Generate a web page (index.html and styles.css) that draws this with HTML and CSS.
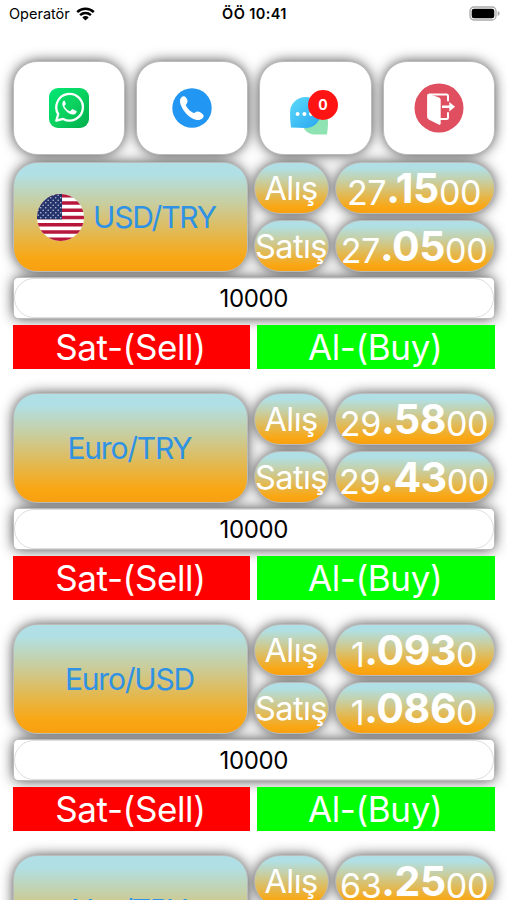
FILE: index.html
```html
<!DOCTYPE html>
<html lang="tr">
<head>
    <meta charset="utf-8">
    <title>Kurlar</title>
    <link rel="stylesheet" href="styles.css">
</head>
<body>
    <div class="statusbar">
        <div class="carrier">
            <span>Operatör</span>
            <svg width="19" height="14" viewBox="0 0 19 14">
                <path d="M1.2 5.2a12 12 0 0 1 16.6 0M4.1 8.1a8 8 0 0 1 10.8 0" fill="none" stroke="#000" stroke-width="2.5"/>
                <path d="M9.5 13.6L6.3 10.4a4.6 4.6 0 0 1 6.4 0z"/>
            </svg>
        </div>
        <div class="clock">ÖÖ 10:41</div>
        <div class="battery">
            <svg width="31" height="15" viewBox="0 0 31 15">
                <rect x="1" y="1" width="26" height="13" rx="4" fill="#fff" stroke="#aaa" stroke-width="1.3"/>
                <rect x="2.7" y="2.7" width="22.6" height="9.6" rx="2.4"/>
                <path d="M28.6 5v5c1.6-.6 2-1.5 2-2.5s-.4-1.9-2-2.5z" fill="#aaa"/>
            </svg>
        </div>
    </div>

    <div class="menu">
        <div class="box menuItem">
            <svg width="40" height="40" viewBox="0 0 40 40">
                <defs>
                    <linearGradient id="wa" x1="0" y1="0" x2="1" y2="1">
                        <stop offset="0" stop-color="#00e676"/>
                        <stop offset=".5" stop-color="#0bd25f"/>
                        <stop offset="1" stop-color="#00ad4c"/>
                    </linearGradient>
                </defs>
                <rect width="40" height="40" rx="9" fill="url(#wa)"/>
                <path d="M7.3 32.7l1.9-6.6a13.3 13.3 0 1 1 5 4.8z" fill="none" stroke="#fff" stroke-width="2.3" stroke-linejoin="round"/>
                <path d="M15.7 12.7c-.7-.2-1.600.3-2 1.200-.9 1.800-.3 4.200 1.300 6.500 2.300 3.300 5.500 5.900 8.600 6.200 1.800.1 3.500-.9 3.900-2.300.2-.8.100-1.200-.5-1.500l-3.100-1.500c-.6-.3-.9-.1-1.300.4l-1.100 1.300c-.3.300-.6.300-1.100.1-2.200-1-3.800-2.500-4.900-4.500-.2-.4-.1-.7.2-1l.9-1.200c.3-.4.2-.7.100-1.100l-1-2.600z" fill="#fff"/>
            </svg>
        </div>
        <div class="box menuItem">
            <svg width="40" height="40" viewBox="0 0 40 40">
                <circle cx="20" cy="20" r="19.7" fill="#2196f3"/>
                <path d="M9.5 9.2c1.7-1.5 3.5-1 4.8.8 1.5 2 1.7 4.3.2 5.9-.7.8-.6 1.6 0 2.6 1.5 2.5 3.5 4.5 6.1 6 1 .6 1.6.6 2.4-.1 1.6-1.4 3.8-1.1 6 .4 3 2 3.4 3.6 1.6 5.4-2.5 2.4-6.4 2.3-10.6 0-5.4-3-9.300-8.200-11.200-13.100C7.6 13.7 7.6 11 9.5 9.2z" fill="#fff"/>
            </svg>
        </div>
        <div class="box menuItem">
            <div class="chat">
                <svg width="40" height="40" viewBox="0 0 40 40">
                    <defs>
                        <linearGradient id="bubble" x1="0" y1="0" x2="1" y2="1">
                            <stop offset="0" stop-color="#5edbfa"/>
                            <stop offset="1" stop-color="#27a5f0"/>
                        </linearGradient>
                    </defs>
                    <path d="M25 14c8 0 14 5.500 14 13q0 6-1 12.500H26c-5 0-9-2.500-11-6z" fill="#8fe3b2"/>
                    <path d="M2 32.500q-1-7-1-15A15.500 15.500 0 1 1 16.500 33z" fill="url(#bubble)"/>
                    <circle cx="8.600" cy="19" r="2" fill="#fff"/>
                    <circle cx="15.400" cy="19" r="2" fill="#fff"/>
                    <circle cx="22" cy="19" r="2" fill="#fff"/>
                </svg>
                <span class="badge">0</span>
            </div>
        </div>
        <div class="box menuItem">
            <svg width="50" height="50" viewBox="0 0 50 50">
                <circle cx="25" cy="25" r="24.5" fill="#df4f60"/>
                <path d="M14.5 10.8L25 14.5q1.7.7 1.7 2.2v23.5q0 2-2 1.2l-9.600-4.700q-2-1-2-3V12.8q0-2 1.400-2z" fill="#fff"/>
                <path d="M15 11.400h17.500q1.500 0 1.500 1.500v5.300M26 36h6.500q1.500 0 1.500-1.500v-5.300" fill="none" stroke="#fff" stroke-width="2"/>
                <path d="M28 22.600h7.300v-3.600L41 23.800l-5.700 4.800v-3.600H28z" fill="#fff"/>
            </svg>
        </div>
    </div>

    <div class="rate">
        <div class="prices">
            <div class="box grad pair">
                <svg class="flag" width="47" height="47" viewBox="0 0 47 47">
                    <defs>
                        <clipPath id="round"><circle cx="23.5" cy="23.5" r="23.5"/></clipPath>
                        <pattern id="stars" width="5" height="5" patternUnits="userSpaceOnUse">
                            <circle cx="1.2" cy="1.2" r=".8" fill="#b9c2da"/>
                            <circle cx="3.7" cy="3.7" r=".8" fill="#b9c2da"/>
                        </pattern>
                    </defs>
                    <g clip-path="url(#round)">
                        <rect width="47" height="47" fill="#fff"/>
                        <path d="M0 1.8h47M0 9h47M0 16.3h47M0 23.5h47M0 30.7h47M0 38h47M0 45.2h47" stroke="#b8173c" stroke-width="3.6"/>
                        <rect width="25" height="25.3" fill="#25336b"/>
                        <rect width="25" height="25.3" fill="url(#stars)"/>
                    </g>
                </svg>
                <span>USD/TRY</span>
            </div>
            <div class="box grad label">Alış</div>
            <div class="box grad value"><span>27</span><b>.15</b><span>00</span></div>
            <div class="box grad label">Satış</div>
            <div class="box grad value"><span>27</span><b>.05</b><span>00</span></div>
        </div>
        <div class="box amount"><div class="amountInner">10000</div></div>
        <div class="buttons">
            <div class="sell">Sat-(Sell)</div>
            <div class="buy">Al-(Buy)</div>
        </div>
    </div>

    <div class="rate">
        <div class="prices">
            <div class="box grad pair"><span>Euro/TRY</span></div>
            <div class="box grad label">Alış</div>
            <div class="box grad value"><span>29</span><b>.58</b><span>00</span></div>
            <div class="box grad label">Satış</div>
            <div class="box grad value"><span>29</span><b>.43</b><span>00</span></div>
        </div>
        <div class="box amount"><div class="amountInner">10000</div></div>
        <div class="buttons">
            <div class="sell">Sat-(Sell)</div>
            <div class="buy">Al-(Buy)</div>
        </div>
    </div>

    <div class="rate">
        <div class="prices">
            <div class="box grad pair"><span>Euro/USD</span></div>
            <div class="box grad label">Alış</div>
            <div class="box grad value"><span>1</span><b>.093</b><span>0</span></div>
            <div class="box grad label">Satış</div>
            <div class="box grad value"><span>1</span><b>.086</b><span>0</span></div>
        </div>
        <div class="box amount"><div class="amountInner">10000</div></div>
        <div class="buttons">
            <div class="sell">Sat-(Sell)</div>
            <div class="buy">Al-(Buy)</div>
        </div>
    </div>

    <div class="rate">
        <div class="prices">
            <div class="box grad pair"><span>Yen/TRY</span></div>
            <div class="box grad label">Alış</div>
            <div class="box grad value"><span>63</span><b>.25</b><span>00</span></div>
        </div>
    </div>
</body>
</html>
```
FILE: styles.css
```css
* {
    box-sizing: border-box;
}
body {
    margin: 0;
    height: 900px;
    overflow: hidden;
    background-color: white;
    font-family: Inter, "Liberation Sans", sans-serif;
}
svg {
    display: block;
}
.statusbar {
    display: grid;
    grid-template-columns: 1fr auto 1fr;
    align-items: center;
    height: 27px;
    padding: 0 7px 0 9px;
    font-size: 14.5px;
}
.carrier {
    display: flex;
    align-items: center;
    gap: 6px;
}
.clock {
    font-weight: 600;
    letter-spacing: 0.4px;
}
.battery {
    display: flex;
    justify-content: flex-end;
}
/* the shadow sits under every box, so neighbours stay clean */
.box {
    position: relative;
    border: 1px solid #bbb;
    border-radius: 24px;
}
.box::before {
    content: "";
    position: absolute;
    inset: 0;
    z-index: -1;
    border-radius: inherit;
    box-shadow: 0 0 14px rgba(0,0,0,0.8);
}
.menu {
    display: grid;
    grid-template-columns: repeat(4, 1fr);
    gap: 11px;
    padding: 0 12px 0 12.5px;
    margin-top: 34px;
}
.menuItem {
    display: flex;
    align-items: center;
    justify-content: center;
    height: 94px;
    background-color: white;
}
.chat {
    position: relative;
    margin: 14px 0 0 -13px;
}
.badge {
    position: absolute;
    left: 19px;
    top: -5px;
    width: 30px;
    height: 30px;
    line-height: 30px;
    border-radius: 15px;
    background-color: #ff1414;
    color: white;
    font-size: 14px;
    font-weight: 700;
    text-align: center;
}
.rate {
    height: 231px;
    padding: 7px 12px 0 12.5px;
}
.prices {
    display: grid;
    grid-template-columns: 235px 75px 160px;
    grid-template-rows: 52px 52px;
    gap: 6px;
}
.grad {
    display: flex;
    align-items: center;
    justify-content: center;
    background-image: linear-gradient(#b0e0e6 10%, #c8cea0 37%, #e6b648 68%, #faa714 88%, #f8a010);
    color: white;
}
.pair {
    grid-row: span 2;
    gap: 9px;
    padding-right: 7px;
    color: #2f92e4;
    font-size: 30px;
    letter-spacing: -1.2px;
}
.pair span:only-child {
    padding-left: 6px;
}
.label {
    font-size: 32.5px;
    letter-spacing: -0.6px;
    border-radius: 26px;
}
.value {
    align-items: baseline;
    padding-right: 1px;
    font-size: 34px;
    line-height: 54px;
    border-radius: 26px;
    letter-spacing: -0.4px;
}
.value b {
    font-size: 41px;
    font-weight: 650;
    position: relative;
    top: -2px;
}
.amount {
    height: 42px;
    margin-top: 5px;
    background-color: white;
    border-radius: 5px;
}
.amountInner {
    height: 40px;
    border: 1px solid #ddd;
    border-radius: 20px;
    line-height: 39px;
    text-align: center;
    font-size: 24px;
    letter-spacing: -0.4px;
}
.buttons {
    display: flex;
    gap: 7px;
    margin-top: 6px;
}
.sell, .buy {
    flex: 1;
    height: 44px;
    line-height: 45px;
    text-align: center;
    color: white;
    font-size: 35px;
    letter-spacing: -0.4px;
    padding-right: 2px;
}
.sell {
    background-color: #f00;
}
.buy {
    background-color: #0f0;
}
```
